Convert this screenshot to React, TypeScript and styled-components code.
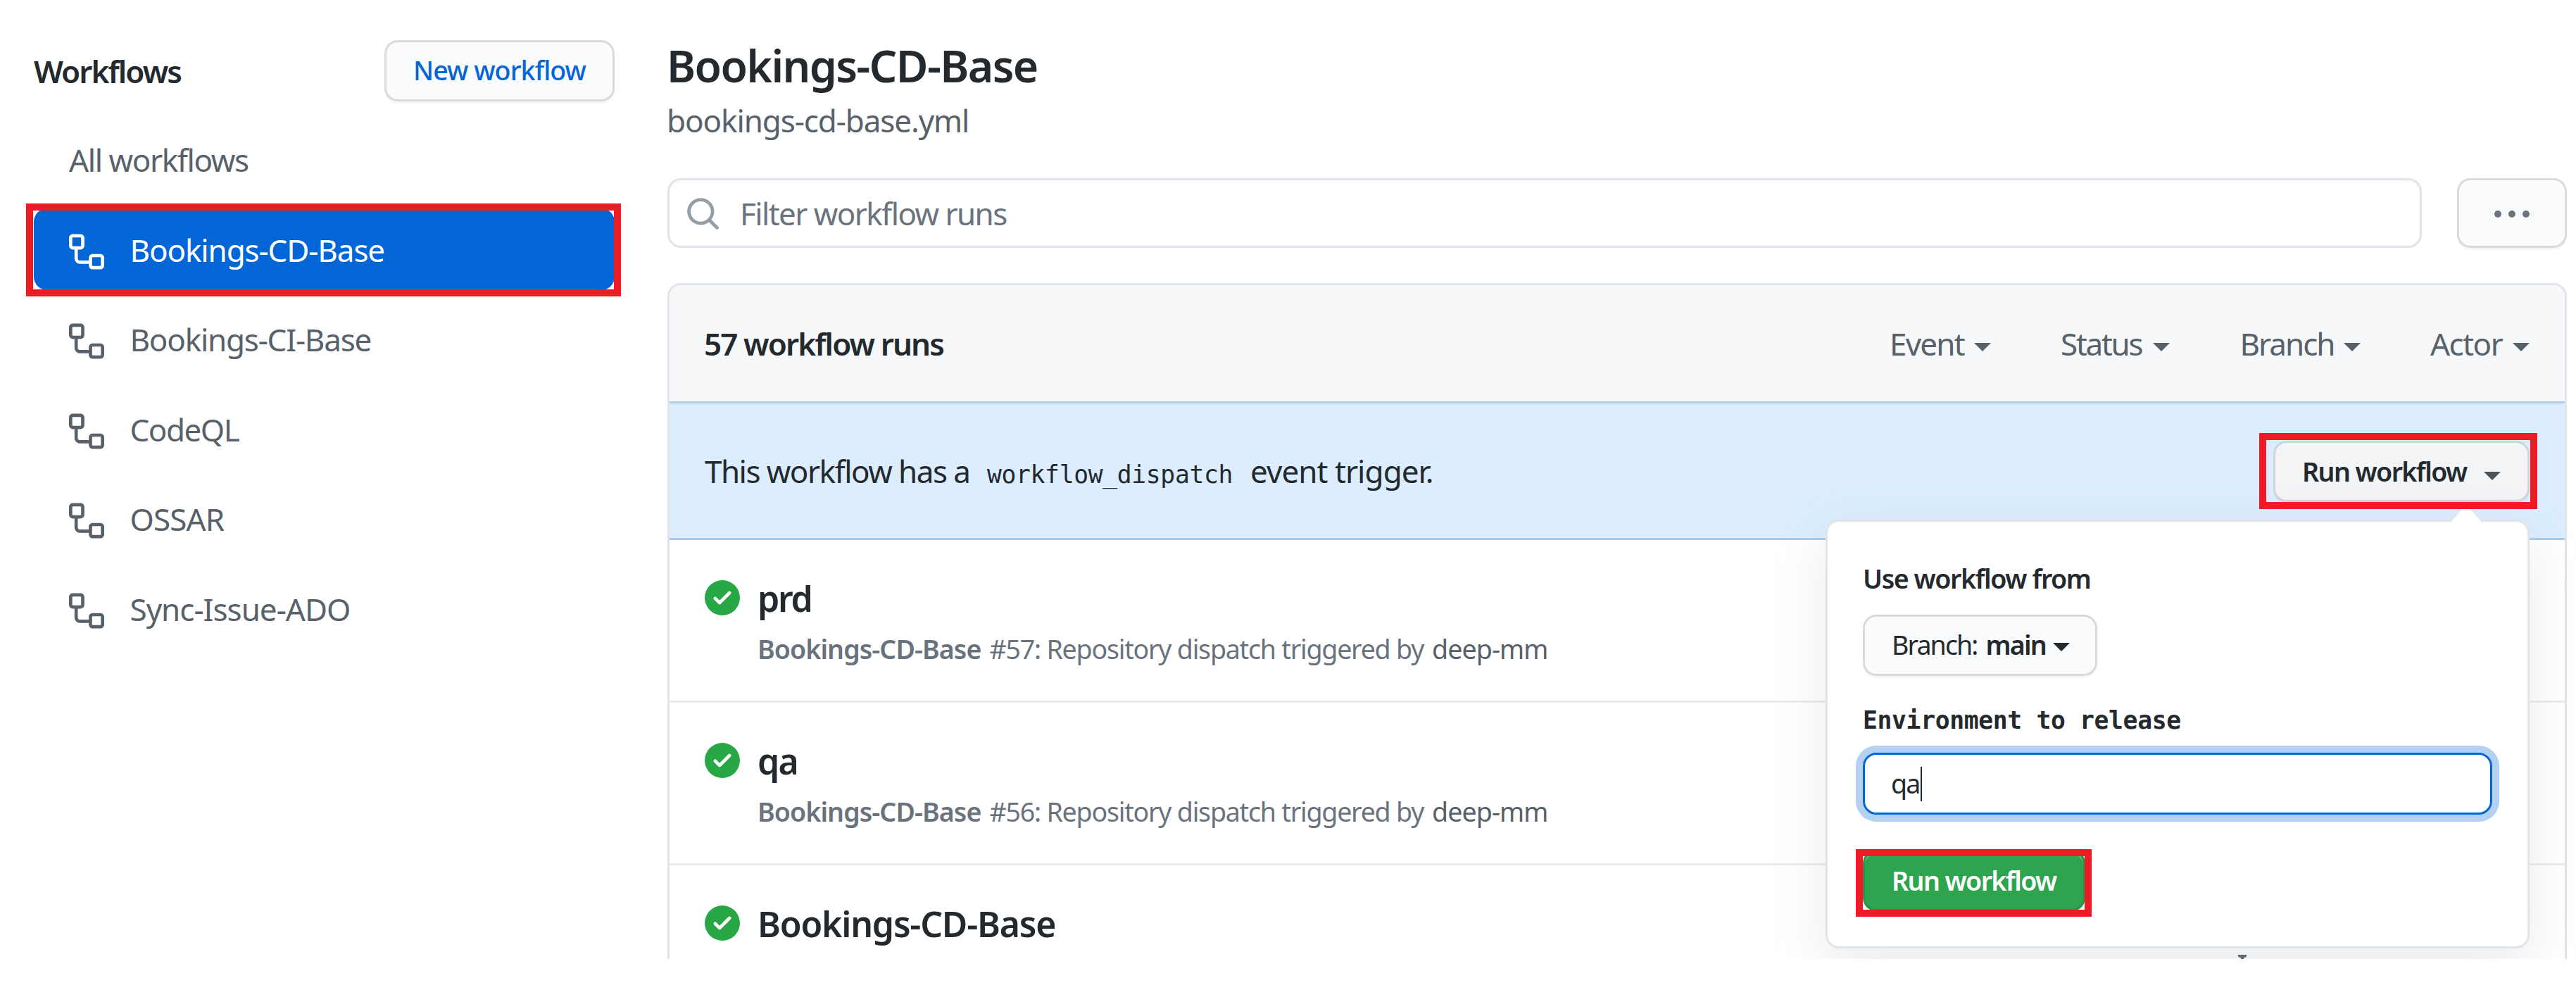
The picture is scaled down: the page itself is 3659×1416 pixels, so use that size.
import React from "react";
import styled, { createGlobalStyle, css } from "styled-components";

const sans = `"Noto Sans", "Open Sans", sans-serif`;
const mono = `"DejaVu Sans Mono", "Liberation Mono", monospace`;

const GlobalStyle = createGlobalStyle`
  *, *::before, *::after { box-sizing: border-box; }
  body { margin: 0; background: #fff; color: #24292e; font-family: ${sans}; overflow: hidden; }
`;

const Page = styled.div`
  display: flex;
  width: 3659px;
  height: 1362px;
  overflow: hidden;
  background: #fff;
`;

/* A run of text with its own tracking. */
const Label = styled.span<{ $size?: number; $weight?: number; $track?: number; $color?: string; $mono?: boolean; $gap?: number }>`
  font-family: ${(p) => (p.$mono ? mono : sans)};
  font-size: ${(p) => p.$size ?? 44}px;
  font-weight: ${(p) => p.$weight ?? 400};
  letter-spacing: ${(p) => p.$track ?? 0}px;
  color: ${(p) => p.$color ?? "inherit"};
  margin-left: ${(p) => p.$gap ?? 0}px;
  line-height: 1.5;
  white-space: nowrap;
`;

/* Red call-out frame drawn over the highlighted control. */
const callout = css<{ $frame?: string }>`
  position: relative;
  &::after {
    content: "";
    position: absolute;
    inset: ${(p) => p.$frame};
    border: 10px solid #ed1c24;
    z-index: 5;
  }
`;

const Button = styled.button<{ $bg?: string; $frame?: string }>`
  display: flex;
  align-items: center;
  height: 87px;
  padding: 0 38px 0 38px;
  border: 3px solid rgba(27, 31, 35, 0.15);
  border-radius: 19px;
  background: ${(p) => p.$bg ?? "#fafbfc"};
  background-clip: border-box;
  box-shadow: 0 3px 0 rgba(27, 31, 35, 0.04), inset 0 3px 0 rgba(255, 255, 255, 0.25);
  color: #24292e;
  ${(p) => p.$frame && callout}
`;

/* ---------- sidebar ---------- */
const Sidebar = styled.aside`
  width: 948px;
  padding: 57px 0 0 48px;
`;
const SideHead = styled.header`
  display: flex;
  align-items: center;
  justify-content: space-between;
  width: 825px;
  height: 87px;
`;
const NavList = styled.nav`
  display: flex;
  flex-direction: column;
  gap: 12.3px;
  width: 825px;
  margin-top: 25px;
`;
const NavItem = styled.a<{ $active?: boolean; $frame?: string }>`
  display: flex;
  align-items: center;
  gap: 36.5px;
  height: 115.2px;
  padding: 1px 0 0 50px;
  border-radius: 19px;
  color: ${(p) => (p.$active ? "#fff" : "#586069")};
  background: ${(p) => (p.$active ? "#0366d6" : "transparent")};
  ${(p) => p.$frame && callout}
  svg { margin-top: 5px; }
`;

/* ---------- main ---------- */
const Main = styled.main`
  width: 2698px;
`;
const Title = styled.h1`
  margin: 49px 0 0 -1px;
  height: 88px;
  display: flex;
  align-items: center;
`;
const FileName = styled.div`
  display: flex;
  align-items: center;
  height: 67px;
  margin: 0 0 49px -1px;
`;
const FilterRow = styled.div`
  display: flex;
  justify-content: space-between;
`;
const SearchField = styled.div`
  display: flex;
  align-items: center;
  width: 2492px;
  height: 99px;
  border: 3px solid #e1e4e8;
  border-radius: 19px;
  box-shadow: inset 0 3px 0 rgba(225, 228, 232, 0.2);
  padding: 1px 0 0 22px;
  gap: 27px;
`;
const MoreButton = styled(Button)`
  width: 156px;
  height: 99px;
  padding: 2px 0 0 0;
  justify-content: center;
`;
const RunsBox = styled.section`
  margin-top: 50px;
  width: 2698px;
  height: 1100px;
  border: 3px solid #e1e4e8;
  border-radius: 19px;
`;
const RunsHead = styled.header`
  display: flex;
  align-items: center;
  justify-content: space-between;
  height: 165px;
  padding: 0 50px 0 49px;
  background: #f6f8fa;
  border-radius: 16px 16px 0 0;
`;
const Filters = styled.div`
  display: flex;
  gap: 99.5px;
`;
const FilterItem = styled.div<{ $width: number }>`
  display: flex;
  align-items: center;
  justify-content: space-between;
  width: ${(p) => p.$width}px;
  color: #586069;
`;
const Caret = styled.i<{ $color?: string; $drop?: number; $gap?: number }>`
  border: 12.5px solid transparent;
  border-top-color: ${(p) => p.$color ?? "currentColor"};
  border-bottom: 0;
  margin-top: ${(p) => p.$drop ?? 11}px;
  margin-left: ${(p) => p.$gap ?? 0}px;
`;
const Dispatch = styled.div`
  position: relative;
  display: flex;
  align-items: center;
  justify-content: space-between;
  height: 197px;
  padding: 0 50px 0 50px;
  background: #dbedff;
  border: solid #aecbea;
  border-width: 3px 0;
`;
const DispatchText = styled.p`
  display: flex;
  align-items: baseline;
  margin: 1px 0 0;
`;
const Run = styled.article`
  display: flex;
  gap: 26px;
  height: 231px;
  padding: 57px 50px 0;
  & + & { border-top: 3px solid #eaecef; }
`;
const RunBody = styled.div`
  display: flex;
  flex-direction: column;
`;
const RunTitle = styled.div`
  display: flex;
  align-items: center;
  height: 52px;
  margin-left: -1px;
`;
const RunMeta = styled.div`
  display: flex;
  align-items: center;
  gap: 12px;
  height: 60px;
  margin: 16px 0 0 -1px;
  color: #6a737d;
`;
const Runs = styled.div`
  ${Run}:first-child { height: 228px; }
`;

/* ---------- popover ---------- */
const Popover = styled.div`
  position: absolute;
  z-index: 3;
  right: 50px;
  top: 165px;
  width: 1000px;
  height: 609px;
  padding: 53px 50px 0;
  background: #fff;
  border: 3px solid #e1e4e8;
  border-radius: 19px;
  box-shadow: 0 26px 77px rgba(149, 157, 165, 0.2);
`;
const Arrow = styled.svg`
  position: absolute;
  top: -26px;
  right: 63px;
`;
const PopLabel = styled.div<{ $height: number; $above?: number }>`
  display: flex;
  align-items: center;
  height: ${(p) => p.$height}px;
  margin-top: ${(p) => p.$above ?? 0}px;
`;
const BranchButton = styled(Button)`
  width: 333px;
  margin-top: 22px;
`;
const Input = styled.div`
  display: flex;
  align-items: center;
  width: 893.5px;
  height: 88px;
  margin-top: 19px;
  padding: 1px 0 0 37px;
  border: 3px solid #0366d6;
  border-radius: 19px;
  box-shadow: 0 0 0 10px rgba(3, 102, 214, 0.3);
`;
const TextCursor = styled.span`
  width: 2px;
  height: 49px;
  margin-left: 1px;
  background: #24292e;
`;
const GreenButton = styled(Button)`
  width: 316px;
  margin-top: 50px;
  padding-top: 2px;
  color: #fff;
`;
const RunButton = styled(Button)`
  width: 364px;
  margin-top: 2px;
  padding-top: 2px;
  justify-content: space-between;
`;
const CutIcon = styled.svg`
  position: absolute;
  right: 451px;
  top: 783px;
`;

const WorkflowIcon = () => (
  <svg width="50" height="51" viewBox="0 0 16 16" fill="currentColor">
    <path fillRule="evenodd" d="M0 1.75C0 .784.784 0 1.75 0h3.5C6.216 0 7 .784 7 1.75v3.5A1.75 1.75 0 015.25 7H4v4a1 1 0 001 1h4v-1.25C9 9.784 9.784 9 10.75 9h3.5c.966 0 1.75.784 1.75 1.75v3.5A1.75 1.75 0 0114.25 16h-3.5A1.75 1.75 0 019 14.25v-.75H5A2.5 2.5 0 012.5 11V7h-.75A1.75 1.75 0 010 5.25v-3.5zm1.75-.25a.25.25 0 00-.25.25v3.5c0 .138.112.25.25.25h3.5a.25.25 0 00.25-.25v-3.5a.25.25 0 00-.25-.25h-3.5zm9 9a.25.25 0 00-.25.25v3.5c0 .138.112.25.25.25h3.5a.25.25 0 00.25-.25v-3.5a.25.25 0 00-.25-.25h-3.5z" />
  </svg>
);
const SearchIcon = () => (
  <svg width="51" height="51" viewBox="0 0 16 16" fill="#959da5">
    <path fillRule="evenodd" d="M11.5 7a4.499 4.499 0 11-8.998 0A4.499 4.499 0 0111.5 7zm-.82 4.74a6 6 0 111.06-1.06l3.04 3.04a.75.75 0 11-1.06 1.06l-3.04-3.04z" />
  </svg>
);
const CheckIcon = () => (
  <svg width="50" height="50" viewBox="0 0 16 16" fill="#28a745">
    <path fillRule="evenodd" d="M8 16A8 8 0 108 0a8 8 0 000 16zm3.78-9.72a.75.75 0 00-1.06-1.06L6.75 9.19 5.28 7.72a.75.75 0 00-1.06 1.06l2 2a.75.75 0 001.06 0l4.5-4.5z" />
  </svg>
);
const DotsIcon = () => (
  <svg width="52" height="12" viewBox="0 0 52 12" fill="#6a737d">
    <circle cx="6" cy="6" r="5" /><circle cx="26" cy="6" r="5" /><circle cx="46" cy="6" r="5" />
  </svg>
);

const workflows = [
  { name: "Bookings-CD-Base", track: -1.12, active: true },
  { name: "Bookings-CI-Base", track: -1.23 },
  { name: "CodeQL", track: -1.5 },
  { name: "OSSAR", track: -0.9 },
  { name: "Sync-Issue-ADO", track: -1.0 },
];
const filters = [
  { name: "Event", track: -1.76, width: 143.5 },
  { name: "Status", track: -2.25, width: 155 },
  { name: "Branch", track: -2.03, width: 171 },
  { name: "Actor", track: -1.5, width: 141 },
];

const RunRow = ({ title, track, id }: { title: string; track: number; id?: number }) => (
  <Run>
    <CheckIcon />
    <RunBody>
      <RunTitle><Label $size={50} $weight={600} $track={track}>{title}</Label></RunTitle>
      {id && (
        <RunMeta>
          <Label $size={37.6} $weight={600} $track={-0.95}>Bookings-CD-Base</Label>
          <Label $size={37.6} $track={-1.23}>#{id}: Repository dispatch triggered by</Label>
          <Label $size={37.6} $track={-0.95} $color="#586069">deep-mm</Label>
        </RunMeta>
      )}
    </RunBody>
  </Run>
);

export default function App() {
  return (
    <>
      <GlobalStyle />
      <Page>
        <Sidebar>
          <SideHead>
            <Label $weight={600} $track={-1.94}>Workflows</Label>
            <Button><Label $size={37.6} $weight={500} $track={-0.94} $color="#0366d6">New workflow</Label></Button>
          </SideHead>
          <NavList>
            <NavItem><Label $track={-1.41}>All workflows</Label></NavItem>
            {workflows.map((w) => (
              <NavItem key={w.name} $active={w.active} $frame={w.active ? "-7.8px -9px -8.9px -11px" : undefined}>
                <WorkflowIcon />
                <Label $track={w.track}>{w.name}</Label>
              </NavItem>
            ))}
          </NavList>
        </Sidebar>
        <Main>
          <Title><Label $size={62.5} $weight={600} $track={-1.66}>Bookings-CD-Base</Label></Title>
          <FileName><Label $track={-1.1} $color="#586069">bookings-cd-base.yml</Label></FileName>
          <FilterRow>
            <SearchField>
              <SearchIcon />
              <Label $track={-1.6} $color="#6a737d">Filter workflow runs</Label>
            </SearchField>
            <MoreButton><DotsIcon /></MoreButton>
          </FilterRow>
          <RunsBox>
            <RunsHead>
              <Label $weight={600} $track={-1.89}>57 workflow runs</Label>
              <Filters>
                {filters.map((f) => (
                  <FilterItem key={f.name} $width={f.width}>
                    <Label $track={f.track}>{f.name}</Label>
                    <Caret />
                  </FilterItem>
                ))}
              </Filters>
            </RunsHead>
            <Dispatch>
              <DispatchText>
                <Label $track={-1.54}>This workflow has a</Label>
                <Label $mono $size={34.7} $track={-0.35} $gap={24.5}>workflow_dispatch</Label>
                <Label $track={-0.95} $gap={25}>event trigger.</Label>
              </DispatchText>
              <RunButton $bg="#f3f4f6" $frame="-14px -14px -13px -23px">
                <Label $size={37.6} $weight={600} $track={-1.6}>Run workflow</Label>
                <Caret $color="#4d5257" $drop={10} />
              </RunButton>
              <CutIcon width="14" height="6" viewBox="0 0 14 6" fill="#586069"><path d="M1 0h12a3 3 0 01-3 4H9v2H5V4H4a3 3 0 01-3-4z" /></CutIcon>
              <Popover>
                <Arrow width="48" height="28" viewBox="0 0 48 28">
                  <path d="M1 26.500L24 -1L47 26.500" fill="#fff" stroke="#e1e4e8" strokeWidth="2" />
                </Arrow>
                <PopLabel $height={57}><Label $size={37.6} $weight={600} $track={-1.44}>Use workflow from</Label></PopLabel>
                <BranchButton>
                  <Label $size={37.6} $track={-1.9}>Branch:</Label>
                  <Label $size={37.6} $weight={600} $track={-1.8} $gap={12}>main</Label>
                  <Caret $drop={5} $gap={10} />
                </BranchButton>
                <PopLabel $height={54} $above={36}>
                  <Label $mono $size={34.7} $weight={700} $track={-0.35}>Environment to release</Label>
                </PopLabel>
                <Input>
                  <Label $size={37.6} $track={-1.8}>qa</Label>
                  <TextCursor />
                </Input>
                <GreenButton $bg="#2ea44f" $frame="-4px -12px -11px -13px">
                  <Label $size={37.6} $weight={600} $track={-1.6}>Run workflow</Label>
                </GreenButton>
              </Popover>
            </Dispatch>
            <Runs>
              <RunRow title="prd" track={-2.2} id={57} />
              <RunRow title="qa" track={-1.8} id={56} />
              <RunRow title="Bookings-CD-Base" track={-1.21} />
            </Runs>
          </RunsBox>
        </Main>
      </Page>
    </>
  );
}
